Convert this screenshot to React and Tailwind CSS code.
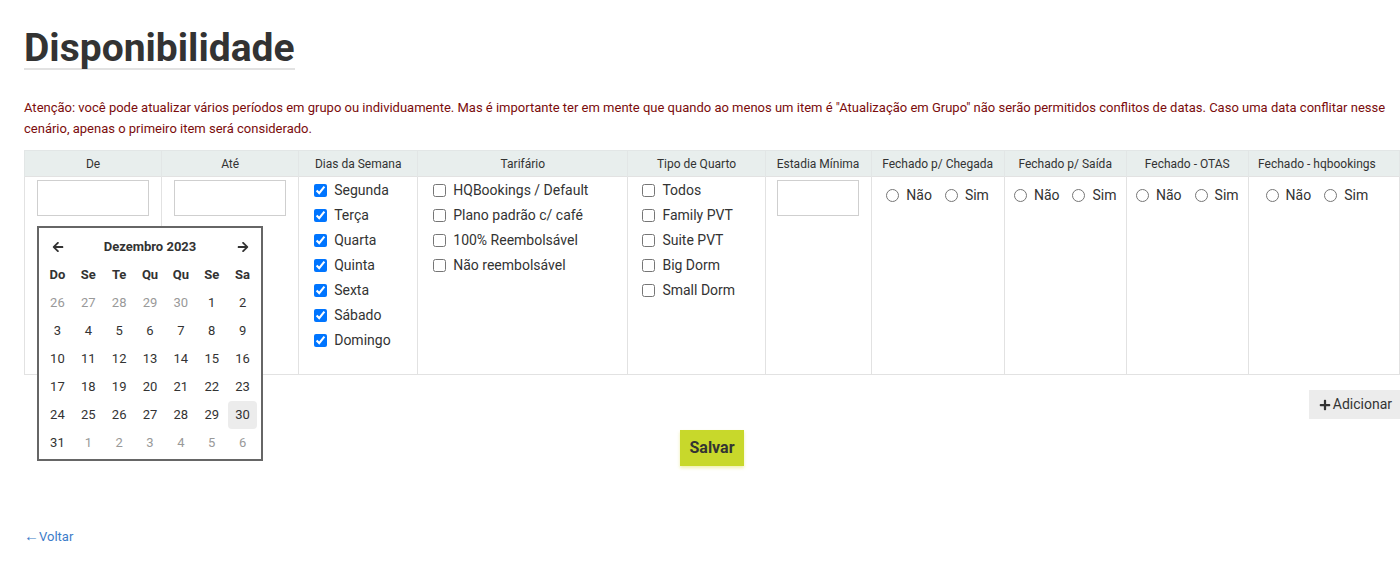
import React from "react";
import { FaArrowLeft, FaArrowRight, FaPlus } from "react-icons/fa";

const cols = [
  { name: "De", w: 137 },
  { name: "Até", w: 137 },
  { name: "Dias da Semana", w: 119 },
  { name: "Tarifário", w: 210 },
  { name: "Tipo de Quarto", w: 137 },
  { name: "Estadia Mínima", w: 106 },
  { name: "Fechado p/ Chegada", w: 133 },
  { name: "Fechado p/ Saída", w: 122 },
  { name: "Fechado - OTAS", w: 122 },
  { name: "Fechado - hqbookings", w: 151 },
];

const dias = ["Segunda", "Terça", "Quarta", "Quinta", "Sexta", "Sábado", "Domingo"];
const tarifas = ["HQBookings / Default", "Plano padrão c/ café", "100% Reembolsável", "Não reembolsável"];
const quartos = ["Todos", "Family PVT", "Suite PVT", "Big Dorm", "Small Dorm"];

const weeks = [
  [[26, 1], [27, 1], [28, 1], [29, 1], [30, 1], [1, 0], [2, 0]],
  [[3, 0], [4, 0], [5, 0], [6, 0], [7, 0], [8, 0], [9, 0]],
  [[10, 0], [11, 0], [12, 0], [13, 0], [14, 0], [15, 0], [16, 0]],
  [[17, 0], [18, 0], [19, 0], [20, 0], [21, 0], [22, 0], [23, 0]],
  [[24, 0], [25, 0], [26, 0], [27, 0], [28, 0], [29, 0], [30, 2]],
  [[31, 0], [1, 1], [2, 1], [3, 1], [4, 1], [5, 1], [6, 1]],
];

function CheckList({ items, checked }) {
  return (
    <div className="flex flex-col pt-[1px]">
      {items.map((t) => (
        <label key={t} className="flex items-center h-[25px] text-[14px] text-[#333]">
          <input
            type="checkbox"
            defaultChecked={checked}
            className="m-0 w-[13px] h-[13px] mr-[7px]"
          />
          <span>{t}</span>
        </label>
      ))}
    </div>
  );
}

function Radios({ extra }) {
  return (
    <div className={"flex justify-center items-center pt-[8px] h-[28px] text-[14px] text-[#333] " + (extra || "")}>
      <label className="flex items-center">
        <input type="radio" className="m-0 w-[13px] h-[13px] mr-[7px]" />
        <span>Não</span>
      </label>
      <label className="flex items-center ml-[13px]">
        <input type="radio" className="m-0 w-[13px] h-[13px] mr-[7px]" />
        <span>Sim</span>
      </label>
    </div>
  );
}

function Calendar() {
  return (
    <div className="absolute left-[13px] top-[76px] w-[226px] h-[235px] bg-white border-2 border-[#666] px-[3px] pt-[9px] text-[13px] text-[#333]">
      <div className="flex items-center h-[20px] mb-[4px]">
        <div className="w-[31px] flex justify-center">
          <FaArrowLeft className="w-[12px] h-[12px]" />
        </div>
        <div className="flex-1 text-center font-bold">Dezembro 2023</div>
        <div className="w-[31px] flex justify-center">
          <FaArrowRight className="w-[12px] h-[12px]" />
        </div>
      </div>
      <div className="flex">
        {["Do", "Se", "Te", "Qu", "Qu", "Se", "Sa"].map((d, i) => (
          <div key={i} className="w-[31px] h-[28px] flex items-center justify-center font-bold">
            {d}
          </div>
        ))}
      </div>
      {weeks.map((w, i) => (
        <div key={i} className="flex">
          {w.map(([n, s], j) => (
            <div key={j} className="w-[31px] h-[28px] flex items-center justify-center">
              {s === 2 ? (
                <div className="w-[29px] h-[28px] rounded-[4px] bg-[#ececec] flex items-center justify-center">
                  {n}
                </div>
              ) : (
                <span className={s === 1 ? "text-[#999]" : ""}>{n}</span>
              )}
            </div>
          ))}
        </div>
      ))}
    </div>
  );
}

export default function App() {
  return (
    <div
      className="w-[1400px] min-h-[570px] overflow-hidden bg-white pl-6"
      style={{ fontFamily: "Roboto, 'Liberation Sans', sans-serif" }}
    >
      <h1 className="inline-block mt-[29px] text-[39px] font-bold leading-none text-[#333] border-b-2 border-[#e2e2e2]">
        Disponibilidade
      </h1>
      <p className="mt-[27px] text-[13px] leading-[21px] text-[#7b0c0c]">
        Atenção: você pode atualizar vários períodos em grupo ou individuamente. Mas é importante ter em mente que quando ao menos um item é "Atualização em Grupo" não serão permitidos conflitos de datas. Caso uma data conflitar nesse cenário, apenas o primeiro item será considerado.
      </p>

      <div className="relative mt-[11px]">
        <table className="table-fixed border-collapse w-[1376px]">
          <colgroup>
            {cols.map((c) => (
              <col key={c.name} style={{ width: c.w }} />
            ))}
          </colgroup>
          <thead>
            <tr>
              {cols.map((c, i) => (
                <th
                  key={c.name}
                  className={
                    "h-[26px] p-0 bg-[#e8eeed] font-normal text-[12px] text-[#333] text-center border-x border-[#e2e6e6] border-t border-b border-b-[#d0d4d4] " +
                    (i === cols.length - 1 ? "pr-[14px]" : "")
                  }
                  style={{ borderTopStyle: "solid", borderLeftStyle: "solid", borderRightStyle: "solid", borderBottomStyle: "dotted" }}
                >
                  {c.name}
                </th>
              ))}
            </tr>
          </thead>
          <tbody>
            <tr className="h-[198px]">
              <td className="align-top p-0 border border-[#e2e2e2]">
                <div className="pt-[3px] pl-[12px]">
                  <input type="text" className="block w-[112px] h-[36px] border border-[#cfcfcf] bg-white" />
                </div>
              </td>
              <td className="align-top p-0 border border-[#e2e2e2]">
                <div className="pt-[3px] pl-[12px]">
                  <input type="text" className="block w-[112px] h-[36px] border border-[#cfcfcf] bg-white" />
                </div>
              </td>
              <td className="align-top p-0 pl-[15px] border border-[#e2e2e2]">
                <CheckList items={dias} checked />
              </td>
              <td className="align-top p-0 pl-[15px] border border-[#e2e2e2]">
                <CheckList items={tarifas} />
              </td>
              <td className="align-top p-0 pl-[14px] border border-[#e2e2e2]">
                <CheckList items={quartos} />
              </td>
              <td className="align-top p-0 border border-[#e2e2e2]">
                <div className="pt-[3px] pl-[11px]">
                  <input type="text" className="block w-[82px] h-[36px] border border-[#cfcfcf] bg-white" />
                </div>
              </td>
              <td className="align-top p-0 border border-[#e2e2e2]">
                <Radios />
              </td>
              <td className="align-top p-0 border border-[#e2e2e2]">
                <Radios />
              </td>
              <td className="align-top p-0 border border-[#e2e2e2]">
                <Radios />
              </td>
              <td className="align-top p-0 border border-[#e2e2e2]">
                <Radios extra="pr-[14px]" />
              </td>
            </tr>
          </tbody>
        </table>
        <Calendar />
      </div>

      <div className="flex justify-end mt-[15px]">
        <button className="flex items-center h-[29px] pl-[10px] pr-[8px] bg-[#ececec] text-[14px] text-[#333]">
          <FaPlus className="w-[12px] h-[12px] mr-[2px]" />
          Adicionar
        </button>
      </div>

      <div className="flex justify-center mt-[11px]">
        <button className="h-[36px] px-[9px] bg-[#c8d82b] text-[16px] font-bold text-[#333] shadow-[0_2px_3px_rgba(230,230,120,0.6)]">
          Salvar
        </button>
      </div>

      <div className="mt-[58px]">
        <a href="#" className="text-[13px] text-[#3d7cc9]">
          <span className="text-[15px] leading-none">←</span>Voltar
        </a>
      </div>
    </div>
  );
}
